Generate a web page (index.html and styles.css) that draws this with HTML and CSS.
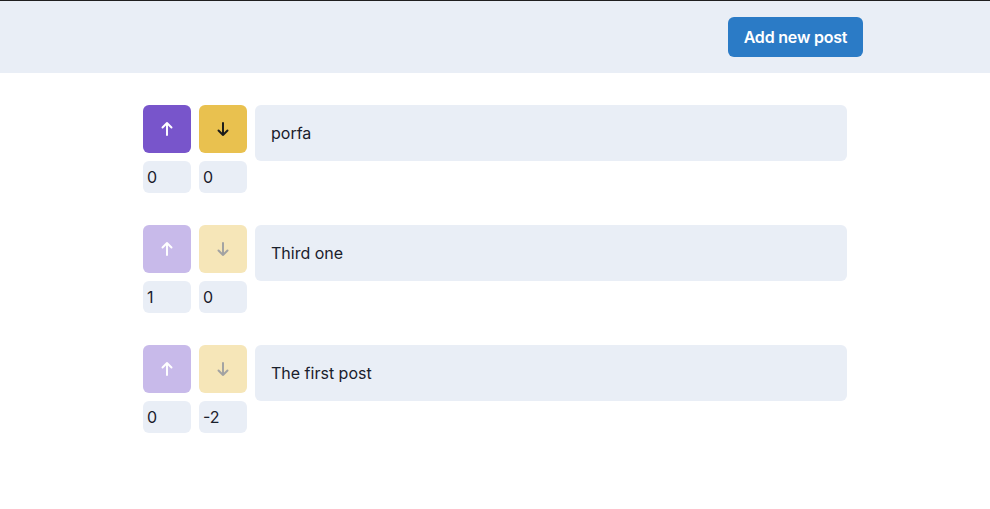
FILE: index.html
```html
<!DOCTYPE html>
<html>
<head>
<meta charset="utf-8">
<link rel="stylesheet" href="styles.css">
</head>
<body>
<header class="topbar">
  <div class="topbar-inner">
    <button class="add-btn">Add new post</button>
  </div>
</header>
<main class="posts">
  <div class="post">
    <div class="votes">
      <div class="vote-buttons">
        <button class="vote up"><svg viewBox="0 0 24 24" width="18" height="18"><path d="M12 20V4M6 10l6-6 6 6" fill="none" stroke="currentColor" stroke-width="2.6" stroke-linecap="round" stroke-linejoin="round"/></svg></button>
        <button class="vote down"><svg viewBox="0 0 24 24" width="18" height="18"><path d="M12 4v16M6 14l6 6 6-6" fill="none" stroke="currentColor" stroke-width="2.6" stroke-linecap="round" stroke-linejoin="round"/></svg></button>
      </div>
      <div class="counts">
        <span class="count">0</span>
        <span class="count">0</span>
      </div>
    </div>
    <div class="post-title">porfa</div>
  </div>
  <div class="post">
    <div class="votes">
      <div class="vote-buttons">
        <button class="vote up faded"><svg viewBox="0 0 24 24" width="18" height="18"><path d="M12 20V4M6 10l6-6 6 6" fill="none" stroke="currentColor" stroke-width="2.6" stroke-linecap="round" stroke-linejoin="round"/></svg></button>
        <button class="vote down faded"><svg viewBox="0 0 24 24" width="18" height="18"><path d="M12 4v16M6 14l6 6 6-6" fill="none" stroke="currentColor" stroke-width="2.6" stroke-linecap="round" stroke-linejoin="round"/></svg></button>
      </div>
      <div class="counts">
        <span class="count">1</span>
        <span class="count">0</span>
      </div>
    </div>
    <div class="post-title">Third one</div>
  </div>
  <div class="post">
    <div class="votes">
      <div class="vote-buttons">
        <button class="vote up faded"><svg viewBox="0 0 24 24" width="18" height="18"><path d="M12 20V4M6 10l6-6 6 6" fill="none" stroke="currentColor" stroke-width="2.6" stroke-linecap="round" stroke-linejoin="round"/></svg></button>
        <button class="vote down faded"><svg viewBox="0 0 24 24" width="18" height="18"><path d="M12 4v16M6 14l6 6 6-6" fill="none" stroke="currentColor" stroke-width="2.6" stroke-linecap="round" stroke-linejoin="round"/></svg></button>
      </div>
      <div class="counts">
        <span class="count">0</span>
        <span class="count">-2</span>
      </div>
    </div>
    <div class="post-title">The first post</div>
  </div>
</main>
</body>
</html>
```
FILE: styles.css
```css
* { box-sizing: border-box; }
html, body { margin: 0; padding: 0; background: #fff; }
body {
  font-family: Inter, "Noto Sans", sans-serif;
  color: #1a202c;
  border-top: 1px solid #1f1f1f;
}
.topbar {
  background: #e9eef6;
  height: 72px;
}
.topbar-inner {
  width: 736px;
  margin: 0 auto;
  display: flex;
  justify-content: flex-end;
  padding-top: 16px;
}
.add-btn {
  height: 40px;
  width: 135px;
  padding: 0;
  border: none;
  border-radius: 6px;
  background: #2b7bc6;
  color: #fff;
  font-family: inherit;
  font-size: 16px;
  font-weight: 600;
  letter-spacing: -0.2px;
}
.posts {
  width: 704px;
  margin: 32px auto 0;
  display: flex;
  flex-direction: column;
  gap: 32px;
}
.post {
  display: flex;
  gap: 8px;
  align-items: flex-start;
}
.votes {
  display: flex;
  flex-direction: column;
  gap: 8px;
}
.vote-buttons, .counts {
  display: flex;
  gap: 8px;
}
.vote {
  width: 48px;
  height: 48px;
  border: none;
  border-radius: 6px;
  display: flex;
  align-items: center;
  justify-content: center;
  padding: 0;
}
.vote.up { background: #7855cb; color: #fff; }
.vote.down { background: #e9c14f; color: #1a1a1a; }
.vote.faded { opacity: 0.4; }
.count {
  width: 48px;
  height: 32px;
  background: #e9eef6;
  border-radius: 6px;
  padding: 0 4px;
  display: flex;
  align-items: center;
  font-size: 16px;
}
.post-title {
  flex: 1;
  height: 56px;
  background: #e9eef6;
  border-radius: 6px;
  padding: 0 16px;
  display: flex;
  align-items: center;
  font-size: 16px;
}
```
